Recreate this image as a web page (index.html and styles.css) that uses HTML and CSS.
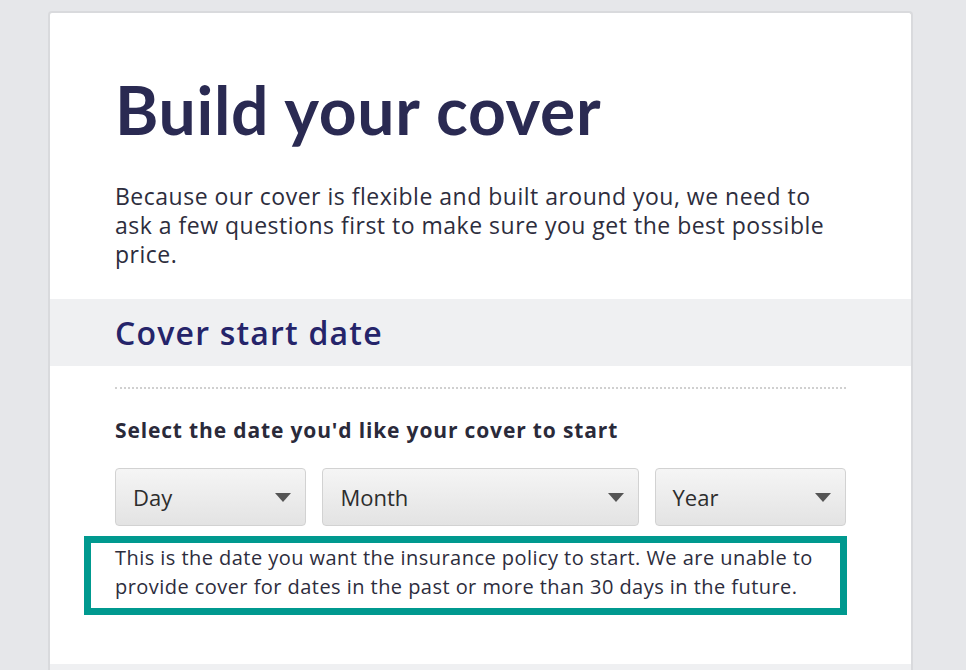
FILE: index.html
```html
<!DOCTYPE html>
<html lang="en">
<head>
<meta charset="utf-8">
<title>Build your cover</title>
<link rel="stylesheet" href="styles.css">
</head>
<body>
<main class="card">
  <section class="intro">
    <h1 class="title">Build your cover</h1>
    <p class="lead">Because our cover is flexible and built around you, we need to ask a few questions first to make sure you get the best possible price.</p>
  </section>
  <header class="band">
    <h2 class="band-title">Cover start date</h2>
  </header>
  <section class="body">
    <hr class="dots">
    <p class="label">Select the date you'd like your cover to start</p>
    <div class="selects">
      <div class="select s-day"><span>Day</span><svg class="caret" width="16" height="9" viewBox="0 0 16 9"><path d="M0 0H16L8 9Z" fill="#555"/></svg></div>
      <div class="select s-month"><span>Month</span><svg class="caret" width="16" height="9" viewBox="0 0 16 9"><path d="M0 0H16L8 9Z" fill="#555"/></svg></div>
      <div class="select s-year"><span>Year</span><svg class="caret" width="16" height="9" viewBox="0 0 16 9"><path d="M0 0H16L8 9Z" fill="#555"/></svg></div>
    </div>
    <div class="hint">This is the date you want the insurance policy to start. We are unable to provide cover for dates in the past or more than 30 days in the future.</div>
  </section>
  <div class="band band-next"></div>
</main>
</body>
</html>
```
FILE: styles.css
```css
html, body {
  margin: 0;
  padding: 0;
  background: #e6e7ea;
  height: 670px;
  overflow: hidden;
}
body {
  font-family: "Open Sans", Lato, sans-serif;
  color: #2c2c3c;
}
.card {
  margin: 11px 0 0 48px;
  width: 865px;
  box-sizing: border-box;
  background: #fff;
  border: 2px solid #d9dadd;
  border-bottom: 0;
  border-radius: 4px 4px 0 0;
}
.intro {
  padding: 0 65px;
}
.title {
  margin: 0;
  padding-top: 64px;
  font-family: Lato, sans-serif;
  font-size: 66px;
  line-height: 66px;
  font-weight: 700;
  letter-spacing: 0.7px;
  color: #2a2a52;
}
.lead {
  margin: 39px 0 0;
  font-size: 23px;
  line-height: 29px;
  letter-spacing: 0.5px;
  color: #2d2d3d;
  padding-bottom: 30px;
}
.band {
  background: #eff0f2;
  height: 67px;
  padding: 0 65px;
  display: flex;
  align-items: center;
}
.band-title {
  margin: 0;
  font-size: 32px;
  font-weight: 600;
  letter-spacing: 1.2px;
  color: #25246a;
}
.body {
  padding: 21px 65px 49px;
}
.dots {
  margin: 0;
  border: 0;
  border-top: 2px dotted #d0d0d0;
  height: 0;
}
.label {
  margin: 28px 0 0;
  font-size: 21px;
  line-height: 26px;
  font-weight: 700;
  letter-spacing: 0.85px;
  color: #2a2a3a;
}
.selects {
  margin-top: 25px;
  display: flex;
  gap: 16px;
}
.select {
  height: 58px;
  box-sizing: border-box;
  border: 1px solid #d2d2d2;
  border-radius: 4px;
  background: linear-gradient(#f5f5f5, #e3e3e3);
  display: flex;
  align-items: center;
  justify-content: space-between;
  padding: 0 14px 0 17px;
  font-size: 22px;
  color: #2d2d2d;
}
.s-day { width: 192px; }
.s-month { width: 317px; }
.s-year { width: 192px; }
.caret { display: block; }
.hint {
  margin: 10px -1px 0 -31px;
  border: 7px solid #00998f;
  padding: 0 10px 7px 24px;
  font-size: 20px;
  line-height: 29px;
  letter-spacing: 0.45px;
  color: #2d2d3d;
}
.band-next {
  height: 40px;
}
```
